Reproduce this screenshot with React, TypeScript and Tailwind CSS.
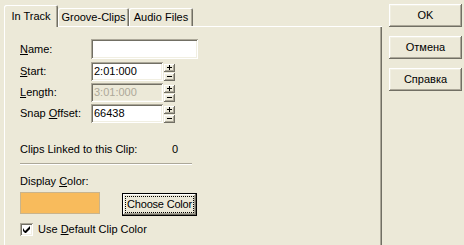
const raised =
  'shadow-[inset_-1px_-1px_0_#716f64,inset_1px_1px_0_#ffffff,inset_-2px_-2px_0_#aca899,inset_2px_2px_0_#f1efe2]'
const sunken =
  'shadow-[inset_1px_1px_0_#aca899,inset_-1px_-1px_0_#ffffff,inset_2px_2px_0_#716f64,inset_-2px_-2px_0_#f1efe2]'

function U({ children }: { children: string }) {
  return <span className="underline underline-offset-[1px]">{children}</span>
}

function Spin() {
  return (
    <div className="ml-[1px] flex flex-col gap-[1px] pt-[1px]">
      <div className={`w-[11px] h-[8px] bg-[#ece9d8] flex items-center justify-center ${raised}`}>
        <svg width="5" height="5" viewBox="0 0 5 5">
          <path d="M0 2h5v1H0zM2 0h1v5H2z" fill="#000" />
        </svg>
      </div>
      <div className={`w-[11px] h-[8px] bg-[#ece9d8] flex items-center justify-center ${raised}`}>
        <svg width="5" height="1" viewBox="0 0 5 1">
          <path d="M0 0h5v1H0z" fill="#000" />
        </svg>
      </div>
    </div>
  )
}

function Row({
  label,
  value,
  disabled,
}: {
  label: React.ReactNode
  value: string
  disabled?: boolean
}) {
  return (
    <div className="flex items-center h-[19px]">
      <div className="w-[71px]">{label}</div>
      <div
        className={`w-[72px] h-[19px] flex items-center pl-[3px] ${sunken} ${
          disabled ? 'bg-[#ece9d8] text-[#aca899]' : 'bg-white'
        }`}
      >
        {value}
      </div>
      <Spin />
    </div>
  )
}

function Tab({ label, active, w }: { label: string; active?: boolean; w: string }) {
  return (
    <div
      className={`${w} flex items-center justify-center whitespace-nowrap rounded-t-[2px] bg-[#ece9d8] ${
        active
          ? 'h-[22px] -mb-[1px] relative z-10 shadow-[inset_1px_1px_0_#ffffff,inset_-1px_0_0_#716f64,inset_-2px_0_0_#aca899]'
          : 'h-[18px] shadow-[inset_1px_1px_0_#ffffff,inset_-1px_0_0_#716f64,inset_-2px_0_0_#aca899]'
      }`}
    >
      {label}
    </div>
  )
}

export default function App() {
  return (
    <div className="w-[464px] h-[245px] overflow-hidden bg-[#ece9d8] flex font-['Liberation_Sans',Arial,sans-serif] text-[11px] leading-[13px] text-black">
      {/* Tabs and page */}
      <div className="w-[382px] pl-[4px] pt-[5px] flex flex-col">
        <div className="flex items-end h-[21px]">
          <Tab label="In Track" active w="w-[54px]" />
          <Tab label="Groove-Clips" w="w-[71px]" />
          <Tab label="Audio Files" w="w-[64px]" />
        </div>
        <div className="flex-1 pl-[16px] pt-[13px] shadow-[inset_1px_1px_0_#ffffff,inset_-1px_0_0_#716f64,inset_-2px_0_0_#aca899]">
          <div className="flex items-center h-[20px] mb-[3px]">
            <div className="w-[71px]">
              <U>N</U>ame:
            </div>
            <div className={`w-[107px] h-[20px] bg-white ${sunken}`} />
          </div>
          <div className="flex flex-col gap-[2px]">
            <Row
              label={
                <>
                  <U>S</U>tart:
                </>
              }
              value="2:01:000"
            />
            <Row
              label={
                <>
                  <U>L</U>ength:
                </>
              }
              value="3:01:000"
              disabled
            />
            <Row
              label={
                <>
                  Snap <U>O</U>ffset:
                </>
              }
              value="66438"
            />
          </div>

          <div className="flex mt-[20px] h-[13px]">
            <div className="w-[152px]">Clips Linked to this Clip:</div>
            <div>0</div>
          </div>
          <div className="mt-[7px] w-[172px] h-[2px] border-t border-[#aca899] border-b border-b-white" />

          <div className="mt-[10px] h-[13px]">
            Display <U>C</U>olor:
          </div>
          <div className="mt-[4px] flex items-start gap-[22px]">
            <div className="w-[80px] h-[22px] bg-[#f8bb5c] border border-[#c9b48c]" />
            <div className="w-[75px] h-[23px] border border-black bg-[#ece9d8] mt-[1px]">
              <div className="w-full h-full p-[2px] shadow-[inset_-1px_-1px_0_#716f64,inset_1px_1px_0_#ffffff,inset_-2px_-2px_0_#aca899]">
                <div className="w-full h-full border border-dotted border-black flex items-center justify-center whitespace-nowrap tracking-[-0.2px]">
                  Choose Color
                </div>
              </div>
            </div>
          </div>

          <div className="mt-[7px] flex items-center h-[13px]">
            <div className={`w-[13px] h-[13px] bg-white flex items-center justify-center ${sunken}`}>
              <svg width="7" height="7" viewBox="0 0 7 7">
                <path d="M0 2v3l2 2h1l4-4V0L2 5z" fill="#000" />
              </svg>
            </div>
            <div className="ml-[5px]">
              Use <U>D</U>efault Clip Color
            </div>
          </div>
        </div>
      </div>

      {/* Dialog buttons */}
      <div className="pl-[7px] pt-[4px] flex flex-col gap-[9px]">
        {['OK', 'Отмена', 'Справка'].map((b) => (
          <div
            key={b}
            className={`w-[73px] h-[23px] flex items-center justify-center bg-[#ece9d8] ${raised}`}
          >
            {b}
          </div>
        ))}
      </div>
    </div>
  )
}
